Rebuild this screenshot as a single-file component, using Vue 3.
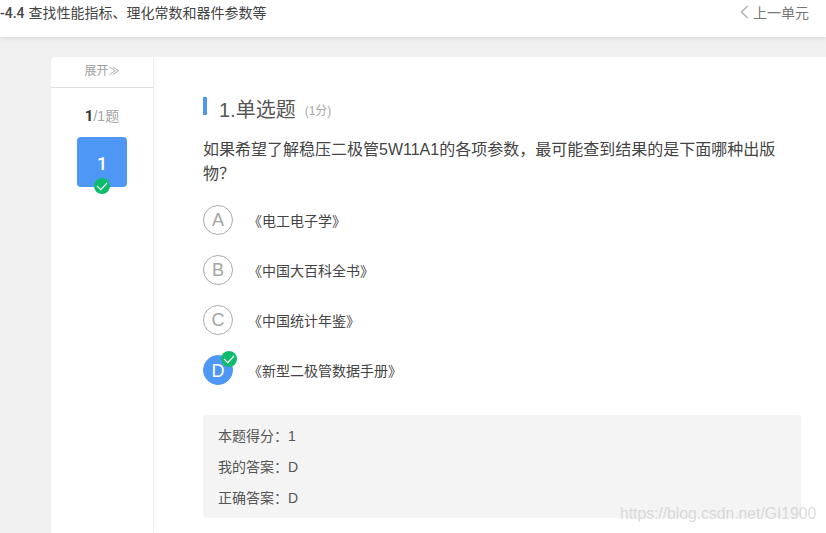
<script setup>
const options = [
  { key: 'A', text: '《电工电子学》', right: false },
  { key: 'B', text: '《中国大百科全书》', right: false },
  { key: 'C', text: '《中国统计年鉴》', right: false },
  { key: 'D', text: '《新型二极管数据手册》', right: true },
]
const results = ['本题得分：1', '我的答案：D', '正确答案：D']
</script>

<template>
  <div class="page">
    <header class="topbar">
      <span class="unit"><b>-4.4</b> 查找性能指标、理化常数和器件参数等</span>
      <span class="prev">
        <svg class="chev" width="9" height="14" viewBox="0 0 9 14"><path d="M7.5 1 1.5 7l6 6" fill="none" stroke="#aaa" stroke-width="1.2"/></svg>
        上一单元
      </span>
    </header>

    <div class="card">
      <aside class="side">
        <div class="expand">展开<span class="dbl">≫</span></div>
        <div class="count"><b>1</b>/1题</div>
        <div class="num">
          1
          <svg class="tick tick-num" viewBox="0 0 16 16"><circle cx="8" cy="8" r="8" fill="#0dbb6d"/><path d="M3 8 6.8 11.6 13 5" fill="none" stroke="#fff" stroke-width="1.1"/></svg>
        </div>
      </aside>

      <main class="main">
        <h2 class="title"><span class="name">1.单选题</span><small>(1分)</small></h2>
        <p class="question">如果希望了解稳压二极管5W11A1的各项参数，最可能查到结果的是下面哪种出版物？</p>
        <ul class="options">
          <li v-for="o in options" :key="o.key" class="option">
            <span class="letter" :class="{ on: o.right }">
              {{ o.key }}
              <svg v-if="o.right" class="tick tick-opt" viewBox="0 0 16 16"><circle cx="8" cy="8" r="8" fill="#0dbb6d"/><path d="M3 8 6.8 11.6 13 5" fill="none" stroke="#fff" stroke-width="1.1"/></svg>
            </span>
            <span class="otext">{{ o.text }}</span>
          </li>
        </ul>
        <div class="result">
          <div v-for="r in results" :key="r" class="rline">{{ r }}</div>
        </div>
      </main>
    </div>

    <div class="mark">https://blog.csdn.net/GI1900</div>
  </div>
</template>

<style>
html, body { margin: 0; overflow: hidden; }
</style>

<style scoped>
.page {
  position: relative;
  width: 826px;
  height: 533px;
  overflow: hidden;
  background: #f0f0f0;
  font-family: "Liberation Sans", "Noto Sans CJK SC", sans-serif;
}
.topbar {
  height: 37px;
  background: #fff;
  box-shadow: 0 1px 5px rgba(0, 0, 0, .1);
  display: flex;
  justify-content: space-between;
  padding: 0 17px 14px 0;
  box-sizing: border-box;
  align-items: center;
  font-size: 14px;
  color: #444;
}
.unit b { font-weight: 500; font-family: Roboto, sans-serif; }
.prev { color: #777; display: flex; align-items: center; gap: 4px; }
.card {
  margin: 20px 0 0 51px;
  height: 476px;
  display: flex;
  background: #fff;
  border-radius: 5px 0 0 0;
}
.side {
  width: 103px;
  box-sizing: border-box;
  flex: none;
  border-right: 1px solid #f0f0f0;
  box-shadow: 1px 0 3px rgba(0, 0, 0, .03);
  display: flex;
  flex-direction: column;
  align-items: center;
}
.expand {
  width: 100%;
  height: 31px;
  box-sizing: border-box;
  border-bottom: 1px solid #ddd;
  text-align: center;
  font-size: 12px;
  line-height: 29px;
  color: #a0a0a0;
}
.dbl { font-size: 11px; }
.count {
  margin-top: 18px;
  height: 21px;
  line-height: 21px;
  font-size: 14px;
  color: #a3a3a3;
}
.count b { color: #333; font-size: 15px; font-family: Roboto, sans-serif; }
.num {
  position: relative;
  margin-top: 10px;
  width: 50px;
  height: 50px;
  border-radius: 4px;
  background: #4f97f5;
  color: #fff;
  font: 500 18px/54px Roboto, sans-serif;
  text-align: center;
}
.tick { position: absolute; width: 16px; height: 16px; display: block; }
.tick-num { left: 17px; bottom: -7px; }
.tick-opt { right: -5px; top: -5px; }
.main { flex: 1; padding: 36px 25px 0 49px; min-width: 0; }
.title {
  margin: 0;
  display: flex;
  align-items: center;
  border-left: 4px solid #4f97f5;
  height: 18px;
  padding-left: 12px;
  font-weight: 400;
  color: #555;
  margin-top: 4px;
}
.name { font-size: 20px; line-height: 24px; margin-top: 7px; }
.title small { font-size: 12px; color: #a8a8a8; margin-left: 9px; margin-top: 7px; }
.question {
  margin: 23px 0 0;
  width: 598px;
  font-size: 16px;
  line-height: 24px;
  color: #444;
}
.options { list-style: none; margin: 19px 0 0; padding: 0; }
.option { height: 30px; margin-bottom: 20px; display: flex; align-items: center; }
.letter {
  position: relative;
  box-sizing: border-box;
  width: 30px;
  height: 30px;
  flex: none;
  border: 1px solid #aaa;
  border-radius: 50%;
  color: #a5a5a5;
  text-align: center;
  font: 18px/29px "Liberation Sans", sans-serif;
}
.letter.on { background: #4f97f5; border-color: #4f97f5; color: #fff; font-weight: 500; line-height: 30px; }
.otext { margin-left: 15px; font-size: 14px; color: #444; }
.result {
  margin-top: 30px;
  width: 598px;
  height: 103px;
  box-sizing: border-box;
  background: #f4f4f4;
  border-radius: 4px;
  padding: 6px 15px;
  font-size: 14px;
  color: #555;
}
.rline { height: 31px; line-height: 31px; }
.mark {
  position: absolute;
  left: 620px;
  top: 505px;
  font: 15.7px "Liberation Sans", sans-serif;
  color: rgba(190, 190, 190, .55);
  white-space: nowrap;
}
</style>
